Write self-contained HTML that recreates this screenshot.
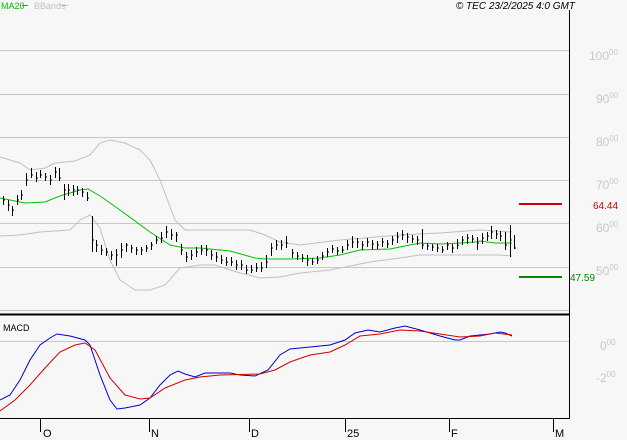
<!DOCTYPE html>
<html><head><meta charset="utf-8"><style>
html,body{margin:0;padding:0;background:#f7f7f7;}
svg{display:block;font-family:"Liberation Sans",sans-serif;}
</style></head><body>
<svg width="627" height="440" viewBox="0 0 627 440" xmlns="http://www.w3.org/2000/svg">
<rect width="627" height="440" fill="#f7f7f7"/>
<g stroke="#c8c8c8" stroke-width="1" shape-rendering="crispEdges">
<line x1="0" y1="50.5" x2="569" y2="50.5"/>
<line x1="0" y1="94.5" x2="569" y2="94.5"/>
<line x1="0" y1="137.5" x2="569" y2="137.5"/>
<line x1="0" y1="180.5" x2="569" y2="180.5"/>
<line x1="0" y1="223.5" x2="569" y2="223.5"/>
<line x1="0" y1="267.5" x2="569" y2="267.5"/>
<line x1="0" y1="310.5" x2="569" y2="310.5"/>
<line x1="0" y1="341.5" x2="569" y2="341.5"/>
</g>
<g stroke="#000" shape-rendering="crispEdges">
<line x1="569.5" y1="10" x2="569.5" y2="418"/>
<line x1="0" y1="314.5" x2="569" y2="314.5" stroke-width="2"/>
<line x1="0" y1="418.5" x2="570" y2="418.5"/>
<path d="M40.5 418V432M149.5 418V432M249.5 418V432M345.5 418V432M449.5 418V432M553.5 418V432"/>
</g>
<g font-size="11" fill="#000">
<text x="43" y="437">O</text><text x="151" y="437">N</text><text x="251" y="437">D</text>
<text x="347" y="437">25</text><text x="451" y="437">F</text><text x="555" y="437">M</text>
</g>
<text x="1" y="9" font-size="9" fill="#00c000">MA20</text>
<line x1="22" y1="5.5" x2="28" y2="5.5" stroke="#00c000"/>
<text x="34" y="9" font-size="9" fill="#c0c0c0">BBands</text>
<line x1="60" y1="5.5" x2="68" y2="5.5" stroke="#c0c0c0"/>
<text x="575" y="9" font-size="10" font-style="italic" text-anchor="end" fill="#000">© TEC 23/2/2025 4:0 GMT</text>
<text x="3" y="331" font-size="9" fill="#000">MACD</text>
<g font-size="12" fill="#c8c8c8">
<text x="589" y="60">100<tspan font-size="8" dy="-5">00</tspan></text>
<text x="596" y="103">90<tspan font-size="8" dy="-5">00</tspan></text>
<text x="596" y="146">80<tspan font-size="8" dy="-5">00</tspan></text>
<text x="596" y="189">70<tspan font-size="8" dy="-5">00</tspan></text>
<text x="596" y="232">60<tspan font-size="8" dy="-5">00</tspan></text>
<text x="596" y="275">50<tspan font-size="8" dy="-5">00</tspan></text>
<text x="600" y="350">0<tspan font-size="8" dy="-5">00</tspan></text>
<text x="596" y="382">-2<tspan font-size="8" dy="-5">00</tspan></text>
</g>
<line x1="519" y1="204" x2="562" y2="204" stroke="#d00000" stroke-width="2"/>
<text x="593" y="209" font-size="10" fill="#d00000">64.44</text>
<line x1="519" y1="277" x2="562" y2="277" stroke="#008800" stroke-width="2"/>
<text x="570" y="281" font-size="10" fill="#008800">47.59</text>
<g fill="none" stroke="#c0c0c0" stroke-width="1">
<polyline points="0,157 20,163 30,170 45,168 55,163 75,161 90,155 100,143 110,140 125,143 140,150 150,160 160,180 175,220 185,230 250,230 265,235 280,242 300,245 340,240 400,235 440,233 480,230 512,232"/>
<polyline points="0,236 20,235 40,232 70,230 80,220 90,215 100,228 110,260 120,280 135,290 150,290 165,285 180,268 200,265 215,265 240,273 260,278 280,277 300,273 330,270 370,262 400,258 420,255 460,255 500,255 512,256"/>
</g>
<polyline fill="none" stroke="#00c000" stroke-width="1" points="0,198 25,203 45,202 60,196 80,190 88,189 100,196 120,210 150,232 170,245 185,248 200,248 230,251 255,258 265,259 290,259 320,258 340,255 360,250 390,249 410,245 420,243 440,244 460,243 475,242 480,241 495,243 512,243"/>
<path fill="none" stroke="#000" stroke-width="1" shape-rendering="crispEdges" d="
M3.5 196V205M3 200H5 M8.5 200V211M8 205H10 M12.5 206V216M12 210H14 M17.5 195V205M17 200H19 M21.5 190V200M21 195H23
M26.5 173V186M26 180H28 M31.5 168V178M31 175H33 M36.5 172V182M36 178H38 M40.5 170V178M40 175H42 M45.5 173V181M45 177H47
M50.5 175V185M50 180H52 M55.5 167V178M55 172H57 M59.5 168V181M59 178H61 M64.5 184V200M64 190H66 M68.5 184V196M68 190H70
M73.5 185V196M73 190H75 M77.5 186V195M77 190H79 M82.5 188V197M82 192H84 M87.5 192V201M87 198H89 M92.5 216V252M92 240H94
M96.5 240V252M96 245H98 M101.5 245V255M101 250H103 M106.5 248V256M106 252H108 M111.5 251V260M111 255H113 M116.5 249V266M116 255H118
M121.5 243V258M121 250H123 M126.5 243V252M126 245H128 M131.5 245V253M131 248H133 M136.5 247V255M136 250H138 M141.5 247V255M141 250H143
M146.5 245V252M146 248H148 M151.5 242V250M151 245H153 M156.5 236V244M156 240H158 M161.5 232V243M161 238H163 M166.5 226V238M166 232H168
M171.5 229V240M171 235H173 M176.5 232V242M176 235H178 M181.5 244V255M181 250H183 M186.5 252V262M186 257H188 M191.5 250V260M191 255H193
M196.5 247V257M196 252H198 M201.5 245V255M201 250H203 M206.5 245V256M206 250H208 M211.5 250V260M211 255H213 M216.5 252V262M216 257H218
M221.5 255V264M221 260H223 M226.5 257V266M226 262H228 M231.5 257V266M231 262H233 M236.5 260V270M236 265H238 M241.5 260V270M241 265H243
M246.5 265V274M246 270H248 M251.5 265V273M251 270H253 M256.5 263V272M256 268H258 M261.5 262V272M261 268H263 M266.5 255V268M266 262H268
M271.5 243V256M271 248H273 M276.5 240V250M276 245H278 M281.5 240V250M281 245H283 M286.5 236V248M286 243H288 M292.5 249V258M292 253H294
M297.5 252V260M297 256H299 M302.5 254V262M302 258H304 M307.5 255V266M307 260H309 M312.5 258V265M312 262H314 M317.5 256V264M317 260H319
M322.5 252V260M322 256H324 M327.5 248V257M327 252H329 M332.5 245V253M332 249H334 M337.5 247V255M337 251H339 M342.5 246V253M342 250H344
M347.5 240V250M347 245H349 M352.5 236V248M352 242H354 M357.5 238V248M357 242H359 M362.5 241V250M362 245H364 M367.5 238V247M367 242H369
M372.5 240V250M372 244H374 M377.5 241V249M377 245H379 M382.5 238V247M382 242H384 M387.5 240V248M387 244H389 M392.5 236V245M392 240H394
M397.5 232V243M397 237H399 M402.5 230V240M402 235H404 M407.5 233V243M407 237H409 M412.5 235V243M412 239H414 M417.5 236V245M417 240H419
M422.5 229V249M422 245H424 M427.5 243V250M427 246H429 M432.5 244V251M432 247H434 M437.5 244V252M437 248H439 M442.5 246V253M442 250H444
M447.5 242V250M447 245H449 M452.5 244V253M452 248H454 M457.5 239V249M457 245H459 M462.5 236V245M462 240H464 M467.5 234V244M467 238H469
M472.5 235V243M472 239H474 M477.5 237V250M477 243H479 M482.5 233V244M482 238H484 M487.5 232V241M487 236H489 M491.5 226V239M491 232H493
M496.5 230V239M496 234H498 M500.5 231V241M500 236H502 M505.5 232V250M505 245H507 M510.5 225V257M510 240H512 M514.5 235V249M514 248H516"/>
<polyline fill="none" stroke="#0000d0" stroke-width="1" points="0,400 10,395 20,380 30,360 40,345 50,338 57,334 70,336 85,340 90,345 100,375 110,400 117,409 125,408 140,405 150,398 160,385 170,375 178,371 185,374 195,377 205,373 230,373 240,375 255,376 268,370 280,355 290,349 300,348 330,345 345,340 355,333 368,330 380,332 395,328 405,326 420,330 440,336 455,340 460,340 470,336 480,335 490,334 500,332 505,333 512,336"/>
<polyline fill="none" stroke="#d00000" stroke-width="1" points="0,411 15,400 30,385 45,368 60,352 75,345 85,343 95,350 110,378 125,395 140,399 150,398 165,388 185,380 200,377 220,375 260,374 275,370 290,362 310,355 330,352 345,345 360,336 380,334 400,330 420,331 440,334 460,337 480,336 495,333 512,335"/>
</svg>
</body></html>
